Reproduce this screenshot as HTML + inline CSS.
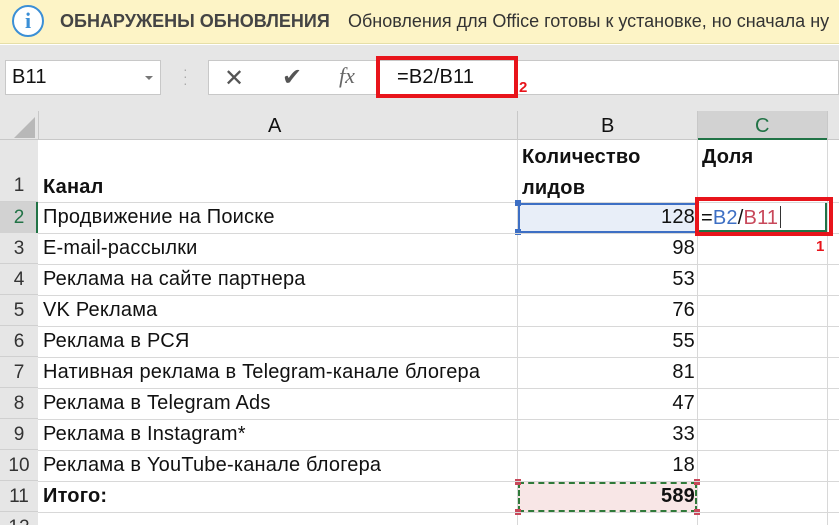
<!DOCTYPE html><html><head><meta charset="utf-8"><style>
*{margin:0;padding:0;box-sizing:border-box}
html,body{width:839px;height:525px;overflow:hidden}
body{background:#fff;font-family:"Liberation Sans",sans-serif;position:relative;color:#111}
.a{position:absolute}
.t{font-size:18px;white-space:nowrap}
.c{font-size:20px;letter-spacing:0.2px;white-space:nowrap}
.rh{position:absolute;left:0;width:38px;text-align:center;font-size:19px;color:#333;background:#e6e6e6;border-bottom:1px solid #d0d0d0}
.hl{position:absolute;left:38px;width:801px;height:1px;background:#d8d8d8}
.vl{position:absolute;top:140px;width:1px;height:385px;background:#d8d8d8}
</style></head><body>
<div class="a" style="left:0;top:0;width:839px;height:44px;background:#fdf4c6;border-bottom:1px solid #e6dfa8"></div>
<div class="a" style="left:12px;top:5px;width:32px;height:32px;border:2px solid #3b8fd6;border-radius:50%;background:#fff;color:#3b8fd6;font:bold 22px 'Liberation Serif',serif;text-align:center;line-height:28px">i</div>
<div class="a t" style="left:60px;top:11px;font-weight:bold;color:#444">ОБНАРУЖЕНЫ ОБНОВЛЕНИЯ</div>
<div class="a t" style="left:348px;top:11px;color:#333">Обновления для Office готовы к установке, но сначала ну</div>
<div class="a" style="left:0;top:45px;width:839px;height:66px;background:#e6e6e6"></div>
<div class="a" style="left:5px;top:60px;width:156px;height:35px;background:#fff;border:1px solid #c8c8c8"></div>
<div class="a c" style="left:12px;top:66px">B11</div>
<div class="a" style="left:145px;top:76px;border:4px solid transparent;border-top:4px solid #777"></div>
<div class="a" style="left:183px;top:66px;color:#aaa;font-size:14px;line-height:7px">·<br>·<br>·</div>
<div class="a" style="left:208px;top:60px;width:631px;height:35px;background:#fff;border:1px solid #c8c8c8"></div>
<div class="a" style="left:224px;top:64px;font-size:24px;color:#555">✕</div>
<div class="a" style="left:282px;top:63px;font-size:24px;color:#555">✔</div>
<div class="a" style="left:339px;top:63px;font:italic 22px 'Liberation Serif',serif;color:#666">fx</div>
<div class="a" style="left:376px;top:56px;width:142px;height:42px;border:4px solid #e8141b"></div>
<div class="a c" style="left:397px;top:66px">=B2/B11</div>
<div class="a" style="left:519px;top:79px;color:#e8141b;font-weight:bold;font-size:15px">2</div>
<div class="a" style="left:0;top:111px;width:839px;height:29px;background:#e6e6e6;border-bottom:1px solid #c8c8c8"></div>
<div class="a" style="left:14px;top:117px;width:0;height:0;border-left:21px solid transparent;border-bottom:21px solid #b8b8b8"></div>
<div class="a" style="left:38px;top:111px;width:1px;height:29px;background:#c8c8c8"></div>
<div class="a" style="left:517px;top:111px;width:1px;height:29px;background:#c8c8c8"></div>
<div class="a" style="left:697px;top:111px;width:1px;height:29px;background:#c8c8c8"></div>
<div class="a" style="left:698px;top:111px;width:129px;height:29px;background:#d2d2d2;border-bottom:2px solid #217346"></div>
<div class="a" style="left:827px;top:111px;width:1px;height:29px;background:#c8c8c8"></div>
<div class="a c" style="left:268px;top:115px">A</div>
<div class="a c" style="left:601px;top:115px">B</div>
<div class="a c" style="left:755px;top:115px;color:#217346">C</div>
<div class="vl" style="left:517px"></div><div class="vl" style="left:697px"></div><div class="vl" style="left:827px"></div>
<div class="a" style="left:0;top:140px;width:38px;height:385px;background:#e6e6e6;border-right:1px solid #c8c8c8"></div>
<div class="rh" style="top:140px;height:62px;line-height:92px">1</div>
<div class="hl" style="top:202px"></div>
<div class="a c" style="left:43px;top:176px;font-weight:bold">Канал</div>
<div class="a c" style="left:522px;top:146px;font-weight:bold">Количество</div>
<div class="a c" style="left:522px;top:177px;font-weight:bold">лидов</div>
<div class="a c" style="left:702px;top:146px;font-weight:bold">Доля</div>
<div class="a" style="left:0;top:202px;width:38px;height:31px;background:#d2d2d2;border-right:2px solid #217346"></div>
<div class="a" style="left:518px;top:203px;width:179px;height:30px;background:#e8eef8;border:2px solid #3d6fc4"></div>
<div class="a" style="left:515px;top:200px;width:6px;height:6px;background:#3d6fc4"></div>
<div class="a" style="left:515px;top:229px;width:6px;height:6px;background:#3d6fc4"></div>
<div class="a" style="left:518px;top:482px;width:179px;height:30px;background:#f8e6e6;border:2px dashed #2f7a3a"></div>
<div class="a" style="left:515px;top:479px;width:6px;height:6px;background:#c8485a"></div>
<div class="a" style="left:694px;top:479px;width:6px;height:6px;background:#c8485a"></div>
<div class="a" style="left:515px;top:509px;width:6px;height:6px;background:#c8485a"></div>
<div class="a" style="left:694px;top:509px;width:6px;height:6px;background:#c8485a"></div>
<div id="rows"></div>
<div class="a" style="left:698px;top:203px;width:129px;height:29px;border:2px solid #217346;border-top:none;border-left:none"></div>
<div class="a" style="left:695px;top:197px;width:138px;height:39px;border:4px solid #e8141b"></div>
<div class="a c" style="left:701px;top:206px">=<span style="color:#3d6fc4">B2</span>/<span style="color:#c8485a">B11</span><span style="display:inline-block;width:1px;height:22px;background:#333;vertical-align:-4px;margin-left:2px"></span></div>
<div class="a" style="left:816px;top:238px;color:#e8141b;font-weight:bold;font-size:15px">1</div>
<script>
var d=[["Продвижение на Поиске",128],["E-mail-рассылки",98],["Реклама на сайте партнера",53],["VK Реклама",76],["Реклама в РСЯ",55],["Нативная реклама в Telegram-канале блогера",81],["Реклама в Telegram Ads",47],["Реклама в Instagram*",33],["Реклама в YouTube-канале блогера",18],["Итого:",589]];
var h="";
for(var i=0;i<11;i++){var y=202+i*31;
if(i>0)h+='<div class="rh" style="top:'+y+'px;height:31px;line-height:31px">'+(i+2)+'</div>';
else h+='<div class="a" style="left:0;width:38px;text-align:center;font-size:19px;top:'+y+'px;line-height:31px;color:#217346">2</div>';
h+='<div class="hl" style="top:'+(y+31)+'px"></div>';
if(i<10){var b=i==9?'font-weight:bold;':'';
h+='<div class="a c" style="'+b+'left:43px;top:'+y+'px;line-height:31px">'+d[i][0]+'</div>';
h+='<div class="a c" style="'+b+'left:520px;width:175px;text-align:right;top:'+y+'px;line-height:31px">'+d[i][1]+'</div>';}}
document.getElementById("rows").innerHTML=h;
</script>
</body></html>
